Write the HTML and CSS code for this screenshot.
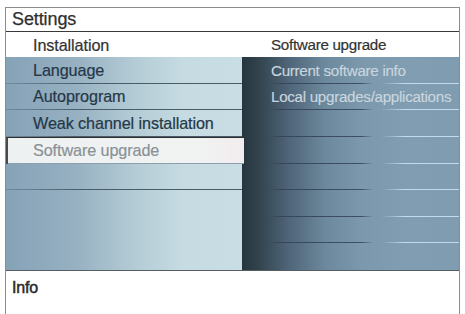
FILE: index.html
```html
<!DOCTYPE html>
<html>
<head>
<meta charset="utf-8">
<link rel="stylesheet" href="styles.css">
</head>
<body>
<div class="frame">
  <div class="title">Settings</div>
  <div class="main">
    <div class="col left">
      <div class="head">Installation</div>
      <div class="rows">
        <div class="row">Language</div>
        <div class="row">Autoprogram</div>
        <div class="row">Weak channel installation</div>
        <div class="row sel">Software upgrade</div>
        <div class="row"></div>
        <div class="row noline"></div>
        <div class="row noline"></div>
        <div class="row noline"></div>
      </div>
    </div>
    <div class="col right">
      <div class="head">Software upgrade</div>
      <div class="rows">
        <div class="row">Current software info</div>
        <div class="row">Local upgrades/applications</div>
        <div class="row"></div>
        <div class="row"></div>
        <div class="row"></div>
        <div class="row"></div>
        <div class="row"></div>
        <div class="row noline"></div>
      </div>
    </div>
  </div>
  <div class="info">Info</div>
</div>
</body>
</html>
```

FILE: styles.css
```css
html, body {
  margin: 0;
  padding: 0;
  background: #ffffff;
}
body {
  font-family: "Liberation Sans", Arial, sans-serif;
  width: 465px;
  height: 314px;
  overflow: hidden;
}
.frame {
  margin: 7px 0 0 5px;
  width: 453px;
  height: 320px;
  border: 1px solid #8c8c8c;
  border-bottom: none;
  display: flex;
  flex-direction: column;
}
.title {
  height: 23px;
  border-bottom: 1px solid #3a3a3a;
  padding-left: 6px;
  font-size: 18px;
  line-height: 23px;
  color: #2f2f2f;
  letter-spacing: -0.1px;
  -webkit-text-stroke: 0.25px #2f2f2f;
}
.main {
  display: grid;
  grid-template-columns: 236px 217px;
  height: 238px;
  border-bottom: 1px solid #555c62;
}
.col {
  display: flex;
  flex-direction: column;
}
.head {
  height: 25px;
  line-height: 26px;
  background: #fff;
  color: #333;
  -webkit-text-stroke: 0.2px #333;
}
.rows {
  flex: 1;
  display: grid;
  grid-template-rows: repeat(8, 1fr);
}
.row {
  display: flex;
  align-items: center;
  position: relative;
}
.left .head, .left .row {
  padding-left: 27px;
  font-size: 16.2px;
  letter-spacing: -0.1px;
}
.left .rows {
  background: linear-gradient(90deg, #86a2b7 0%, #97b1c2 30%, #b4ccd5 55%, #c6dbe2 75%, #c9dde4 100%);
}
.left .row {
  color: #263848;
  -webkit-text-stroke: 0.2px #263848;
}
.left .row::after {
  content: "";
  position: absolute;
  left: 0;
  right: 0;
  bottom: 0;
  height: 1px;
  background: linear-gradient(90deg, rgba(70,90,105,0.35), #4a5c6a 30%, #4a5c6a);
}
.left .row.noline::after {
  display: none;
}
.left .row.sel {
  background: linear-gradient(90deg, #eef1f1 0%, #f1f3f3 80%, #f2ecee 100%);
  color: #8a9197;
  -webkit-text-stroke: 0.2px #8a9197;
  border-top: 1px solid #2f2f2f;
  border-left: 2px solid #4a4a4a;
  margin-right: -2px;
  padding-left: 25px;
  z-index: 1;
}
.left .row.sel::after {
  background: #8aa0ae;
}
.right .head, .right .row {
  padding-left: 29px;
  font-size: 15.2px;
  letter-spacing: -0.3px;
}
.right .rows {
  background: linear-gradient(90deg, #26343e 0%, #33444f 8%, #50667a 22%, #6c889c 38%, #7b98ac 55%, #809db1 75%, #7f9cb0 100%);
}
.right .row {
  color: #c9d6df;
  -webkit-text-stroke: 0.15px #c9d6df;
}
.right .row::after {
  content: "";
  position: absolute;
  left: 22px;
  right: 0;
  bottom: 0;
  height: 1px;
  background: linear-gradient(90deg, rgba(40,55,68,0) 0%, #34475a 8%, #3d5163 50%, rgba(90,115,135,0) 56%, rgba(190,215,235,0) 60%, #c2daec 72%, #c2daec 100%);
}
.right .row.noline::after {
  display: none;
}
.info {
  padding: 8px 0 0 6px;
  font-size: 16px;
  color: #2a2a2a;
  letter-spacing: -0.2px;
  -webkit-text-stroke: 0.5px #2a2a2a;
}
```
